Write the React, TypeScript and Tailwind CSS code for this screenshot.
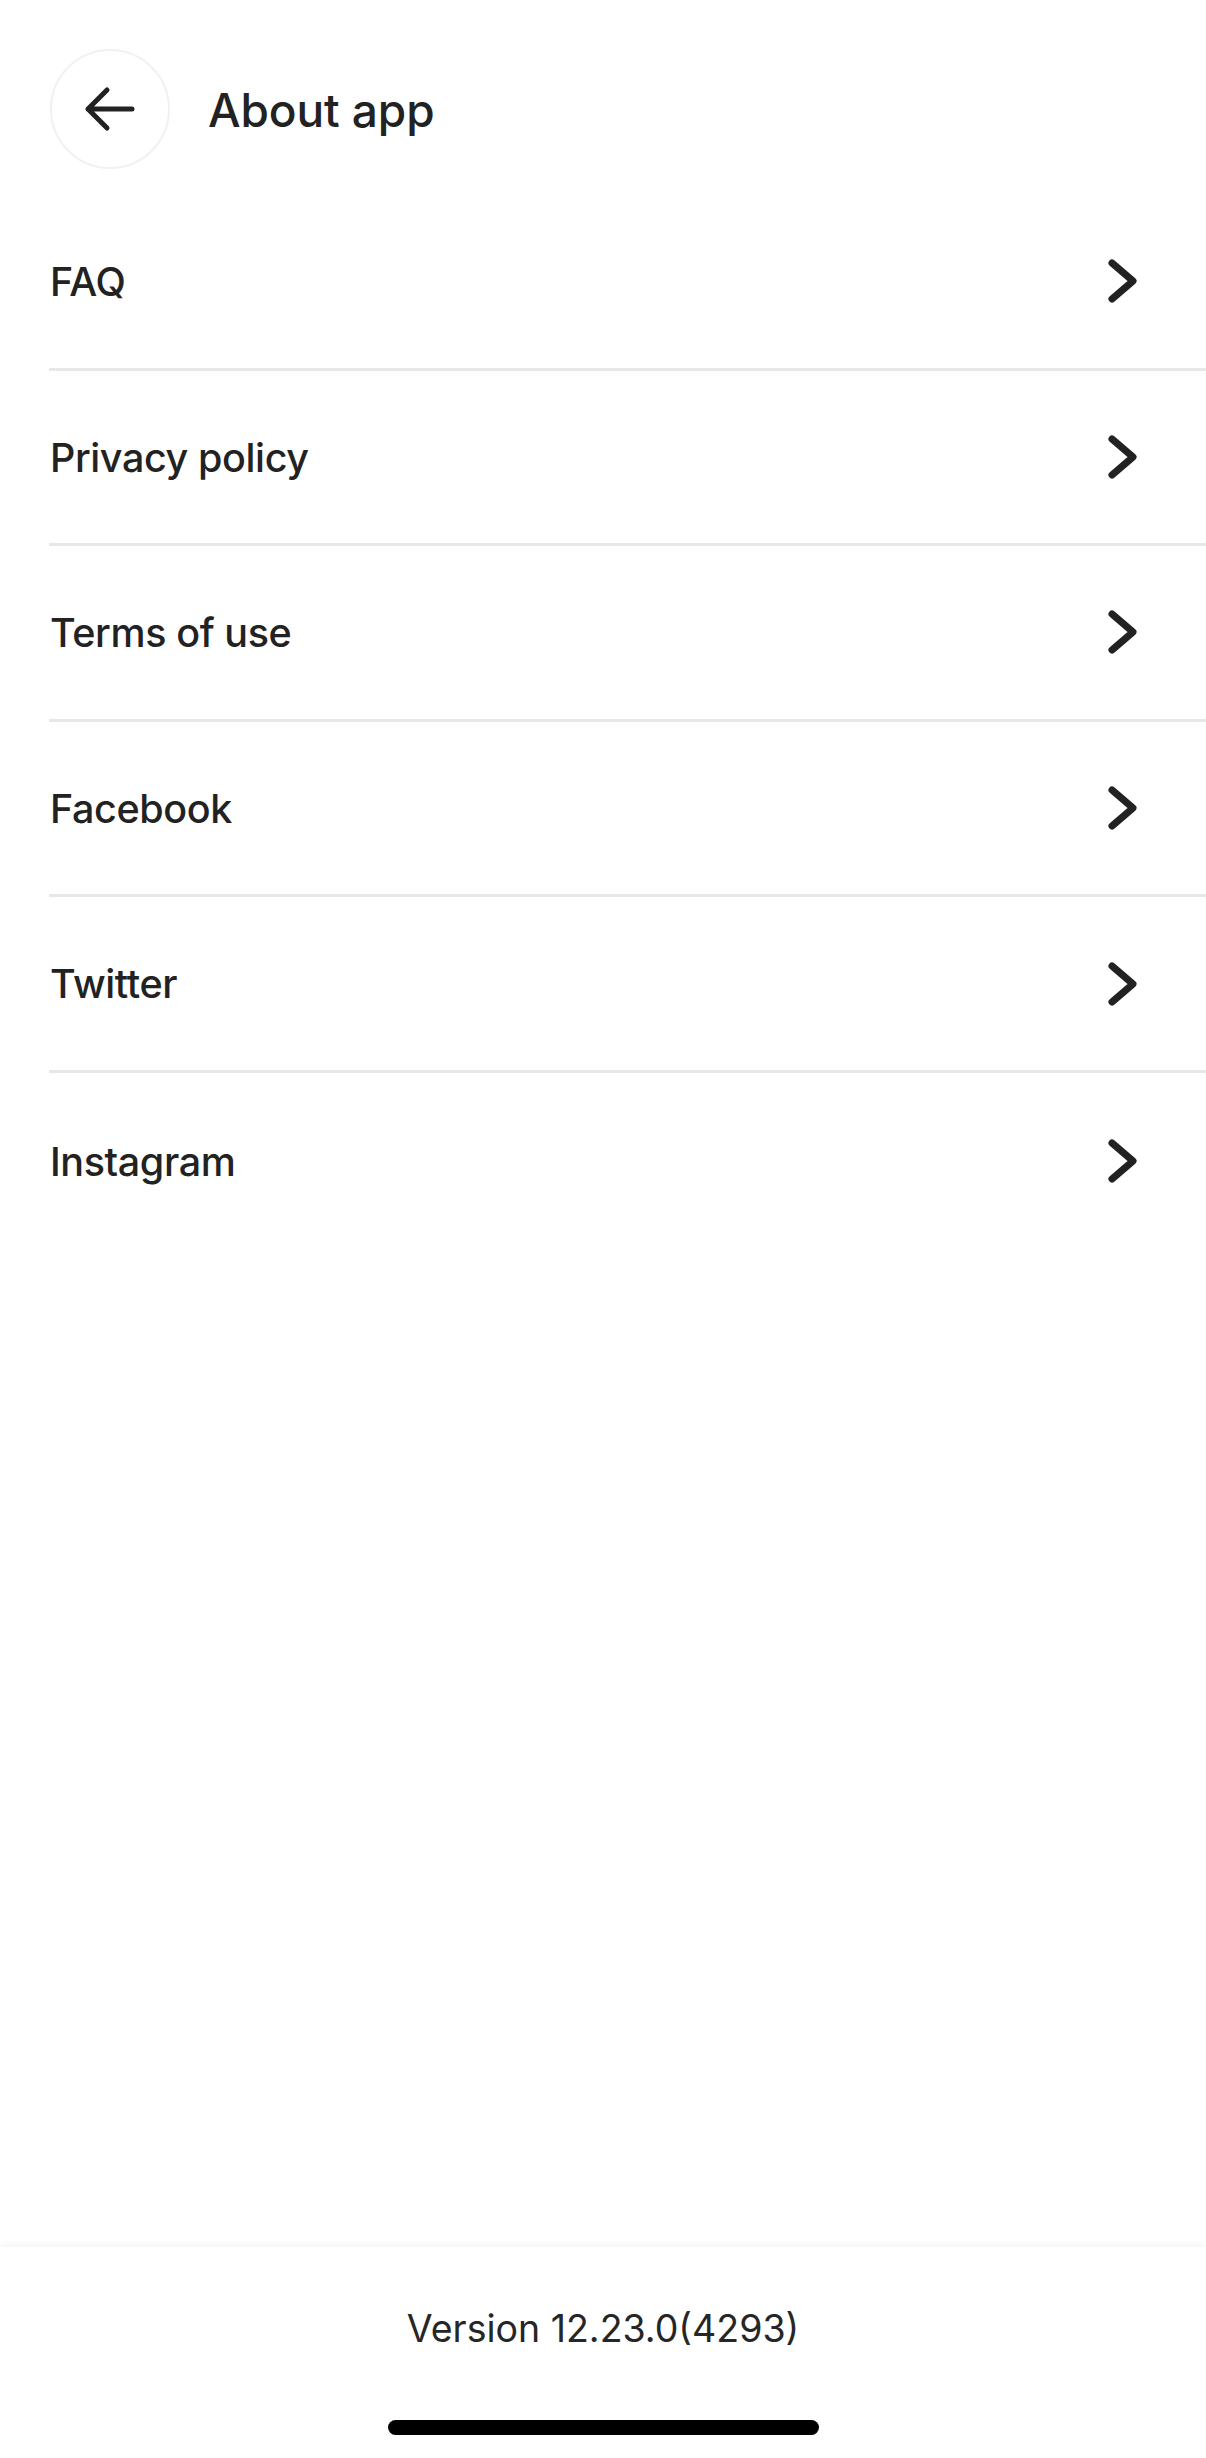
import React from "react";

const items = ["FAQ", "Privacy policy", "Terms of use", "Facebook", "Twitter", "Instagram"];

function Chevron() {
  return (
    <svg width="36" height="50" viewBox="0 0 36 50" fill="none" aria-hidden="true">
      <path d="M7 7 L28 25 L7 43" stroke="#222222" strokeWidth="7" strokeLinecap="round" strokeLinejoin="round" />
    </svg>
  );
}

function BackArrow() {
  return (
    <svg width="52" height="46" viewBox="0 0 52 46" fill="none" aria-hidden="true">
      <path d="M4 23 H48 M23 4 L4 23 L23 42" stroke="#222222" strokeWidth="5" strokeLinecap="round" strokeLinejoin="round" />
    </svg>
  );
}

export default function App() {
  return (
    <div
      className="flex min-h-[2458px] w-[1206px] flex-col bg-white text-[#222222]"
      style={{ fontFamily: "Inter, 'Noto Sans', sans-serif" }}
    >
      <header className="flex h-[195px] items-start pl-[50px] pt-[49px]">
        <div className="flex items-center gap-[38px]">
          <button className="flex h-[120px] w-[120px] items-center justify-center rounded-full border-2 border-[#f1f1f1] bg-white">
            <BackArrow />
          </button>
          <h1 className="pt-[2px] text-[46px] font-medium leading-none tracking-[-0.1px]">About app</h1>
        </div>
      </header>

      <ul className="pl-[49px]">
        {items.map((label, i) => (
          <li
            key={label}
            className={
              i < items.length - 1
                ? "flex h-[175.6px] items-center justify-between border-b-[3px] border-[#e8e8e8] pr-[65px]"
                : "flex h-[175.6px] items-center justify-between pr-[65px]"
            }
          >
            <span className="pl-[1px] pt-[3px] text-[39.5px] font-medium leading-none tracking-[-0.4px]">{label}</span>
            <Chevron />
          </li>
        ))}
      </ul>

      <div className="flex-1" />

      <footer className="flex h-[211px] flex-col items-center bg-white pt-[58px] shadow-[0_-3px_8px_rgba(0,0,0,0.045)]">
        <p className="text-[37.5px] font-normal leading-[48px] text-[#262626]">Version 12.23.0(4293)</p>
        <div className="mt-[67px] h-[15px] w-[431px] rounded-full bg-black" />
      </footer>
    </div>
  );
}
